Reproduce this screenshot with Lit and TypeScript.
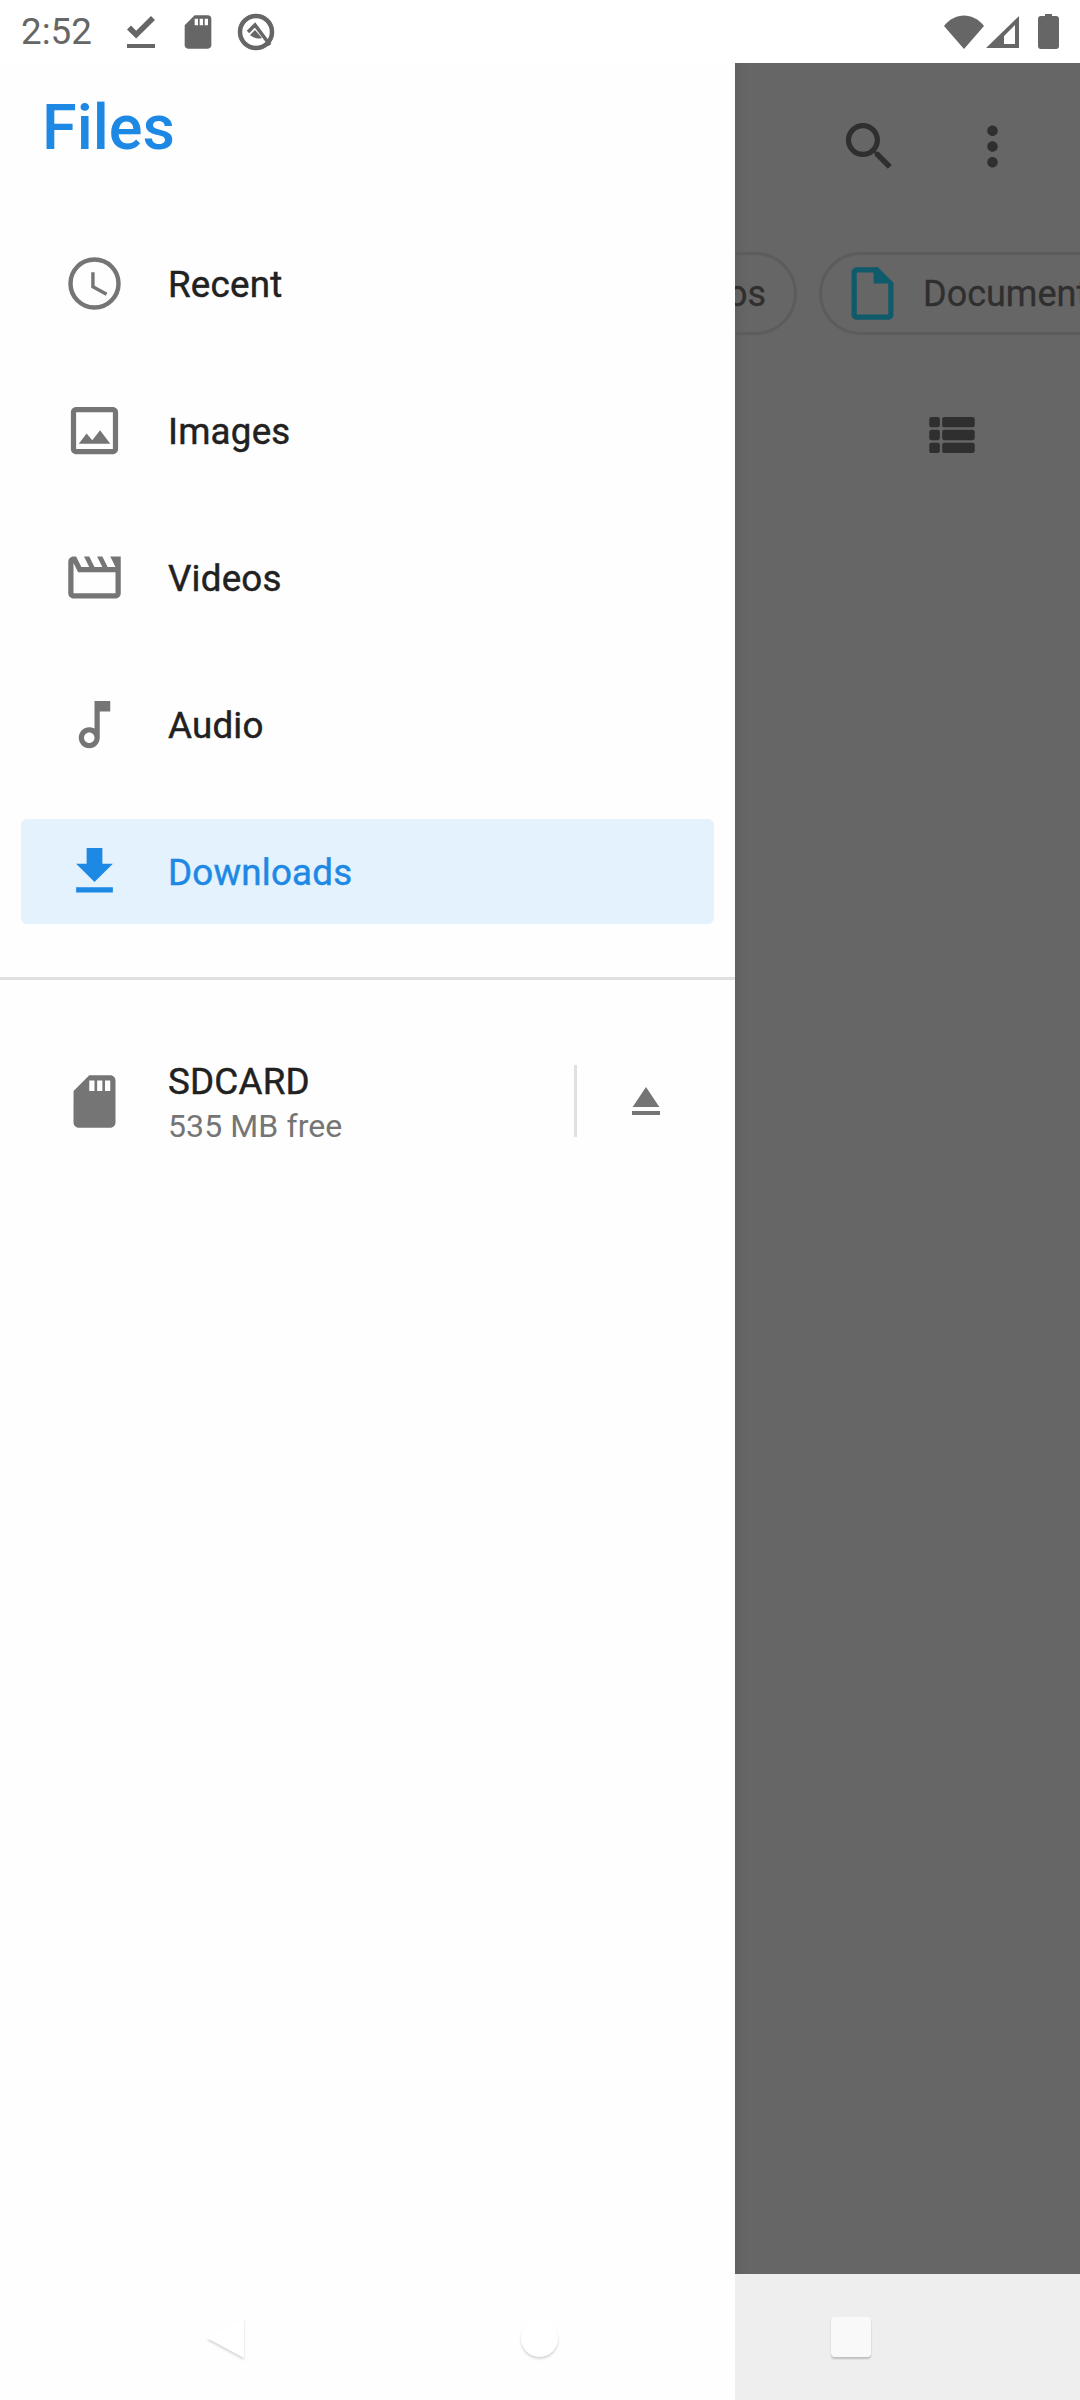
import { LitElement, html, css, svg } from 'lit';
import { customElement } from 'lit/decorators.js';

const ICONS = {
  recent: svg`<circle cx="12" cy="12" r="9.15" fill="none" stroke="currentColor" stroke-width="1.7"/><path d="M11.4 7.7v5.5l5.2 2.900" fill="none" stroke="currentColor" stroke-width="1.3"/>`,
  images: svg`<path d="M19 5v14H5V5h14m0-2H5c-1.1 0-2 .9-2 2v14c0 1.1.9 2 2 2h14c1.1 0 2-.9 2-2V5c0-1.1-.9-2-2-2z"/><path d="M14.14 11.86l-3 3.87L9 13.14 6 17h12l-3.86-5.14z"/>`,
  videos: svg`<path d="M4 6.47L5.76 10H20v8H4V6.47M22 4h-4l2 4h-3l-2-4h-2l2 4h-3l-2-4H8l2 4H7L5 4H4c-1.1 0-1.99.9-1.99 2L2 18c0 1.1.9 2 2 2h16c1.1 0 2-.9 2-2V4z"/>`,
  audio: svg`<path d="M12 3l.01 10.55c-.59-.34-1.27-.55-2-.55C7.79 13 6 14.79 6 17s1.79 4 4.01 4S14 19.21 14 17V7h4V3h-6zm-1.99 16c-1.1 0-2-.9-2-2s.9-2 2-2 2 .9 2 2-.9 2-2 2z"/>`,
  downloads: svg`<path d="M19 9h-4V3H9v6H5l7 7 7-7zM5 18v2h14v-2H5z"/>`,
  sd: svg`<path d="M18 2h-8L4.02 8 4 20c0 1.1.9 2 2 2h12c1.1 0 2-.9 2-2V4c0-1.1-.9-2-2-2zm-6 6h-2V4h2v4zm3 0h-2V4h2v4zm3 0h-2V4h2v4z"/>`,
  eject: svg`<path d="M5 17h14v2H5zm7-12L5.33 15h13.34z"/>`,
  done: svg`<path d="M5 18h14v2H5v-2zm4.6-2.7L5 10.7l2-1.9 2.6 2.6L17 4l2 2-9.4 9.3z"/>`,
  search: svg`<path d="M15.5 14h-.79l-.28-.27C15.41 12.59 16 11.11 16 9.5 16 5.91 13.09 3 9.5 3S3 5.91 3 9.5 5.91 16 9.5 16c1.61 0 3.09-.59 4.23-1.57l.27.28v.79l5 4.99L20.49 19l-4.99-5zm-6 0C7.01 14 5 11.99 5 9.5S7.01 5 9.5 5 14 7.01 14 9.5 11.99 14 9.5 14z"/>`,
  more: svg`<path d="M12 8c1.1 0 2-.9 2-2s-.9-2-2-2-2 .9-2 2 .9 2 2 2zm0 2c-1.1 0-2 .9-2 2s.9 2 2 2 2-.9 2-2-.9-2-2-2zm0 6c-1.1 0-2 .9-2 2s.9 2 2 2 2-.9 2-2-.9-2-2-2z"/>`,
  list: svg`<path d="M4 14h2.5a.8.8 0 0 0 .8-.8v-2.4a.8.8 0 0 0-.8-.8H4a.8.8 0 0 0-.8.8v2.4c0 .44.36.8.8.8zm0 5h2.5a.8.8 0 0 0 .8-.8v-2.4a.8.8 0 0 0-.8-.8H4a.8.8 0 0 0-.8.8v2.4c0 .44.36.8.8.8zm0-10h2.5a.8.8 0 0 0 .8-.8V5.800a.8.8 0 0 0-.8-.8H4a.8.8 0 0 0-.8.8v2.400c0 .44.36.8.8.8zm5 5h11a.8.8 0 0 0 .8-.8v-2.400a.8.8 0 0 0-.8-.8H9a.8.8 0 0 0-.8.8v2.400c0 .44.36.8.8.8zm0 5h11a.8.8 0 0 0 .8-.8v-2.400a.8.8 0 0 0-.8-.8H9a.8.8 0 0 0-.8.8v2.400c0 .44.36.8.8.8zM8.200 5.800v2.400c0 .44.36.8.8.8h11a.8.8 0 0 0 .8-.8V5.800a.8.8 0 0 0-.8-.8H9a.8.8 0 0 0-.8.8z"/>`,
  file: svg`<path d="M14 2H6c-1.100 0-1.990.9-1.990 2L4 20c0 1.100.89 2 1.990 2H18c1.100 0 2-.9 2-2V8l-6-6zm4 18H6V4h6.500v4H18v12z"/><path d="M12.500 2H14l6 6v.2h-7.500z"/>`,
};

type IconName = keyof typeof ICONS;

const icon = (name: IconName, cls = '') =>
  html`<svg class="icon ${cls}" viewBox="0 0 24 24" fill="currentColor">${ICONS[name]}</svg>`;

const ROOTS: { name: string; icon: IconName; active?: boolean }[] = [
  { name: 'Recent', icon: 'recent' },
  { name: 'Images', icon: 'images' },
  { name: 'Videos', icon: 'videos' },
  { name: 'Audio', icon: 'audio' },
  { name: 'Downloads', icon: 'downloads', active: true },
];

@customElement('app-root')
export class AppRoot extends LitElement {
  static styles = css`
    :host {
      display: block;
      width: 1080px;
      height: 2400px;
      overflow: hidden;
      background: #fefefe;
      font-family: Roboto, 'Noto Sans', sans-serif;
      color: #212121;
    }

    /* status bar */
    .status {
      height: 63px;
      display: flex;
      align-items: center;
      padding: 0 21px;
      color: #666;
      background: #fff;
    }
    .clock {
      font-size: 36.75px;
      width: 96px;
      margin-top: -1px;
    }
    .status .icon {
      width: 48px;
      height: 48px;
    }
    .status .sd {
      width: 40px;
      height: 40px;
      margin-left: 13px;
    }
    .qlogo {
      width: 38px;
      height: 38px;
      margin-left: 19px;
    }
    .status-right {
      margin-left: auto;
      display: flex;
      align-items: center;
    }
    .status-right svg {
      display: block;
    }

    .body {
      height: 2337px;
      display: flex;
    }

    /* drawer */
    .drawer {
      width: 735px;
      flex: none;
      display: flex;
      flex-direction: column;
      background: #fefefe;
    }
    .title {
      font-size: 63px;
      font-weight: 500;
      color: #1e88e5;
      line-height: 74px;
      padding: 28px 0 0 42px;
      height: 140px;
      box-sizing: border-box;
    }
    .roots {
      display: flex;
      flex-direction: column;
      gap: 42px;
      padding: 28px 21px 0;
    }
    /* the device's Roboto Medium is lighter than the installed one */
    .root,
    .sd-name {
      font-weight: 400;
      letter-spacing: 0.2px;
      -webkit-text-stroke: 0.45px currentColor;
    }
    .root {
      height: 105px;
      display: flex;
      align-items: center;
      padding-left: 42px;
      gap: 42px;
      border-radius: 6px;
      font-size: 36.75px;
      color: #212121;
    }
    .root span {
      padding-top: 2px;
    }
    .root .icon {
      width: 63px;
      height: 63px;
      color: #757575;
      flex: none;
    }
    .root.active {
      background: #e3f2fd;
      color: #1e88e5;
    }
    .root.active .icon {
      color: #1e88e5;
    }
    .divider {
      height: 3px;
      background: #e0e0e0;
      margin-top: 53px;
    }
    .sdcard {
      margin-top: 85px;
      height: 72px;
      display: flex;
      align-items: center;
      padding: 0 20px 0 63px;
    }
    .sdcard > .icon {
      width: 63px;
      height: 63px;
      color: #757575;
      flex: none;
      margin-right: 42px;
    }
    .sd-text {
      flex: 1;
      display: flex;
      flex-direction: column;
      font-size: 36.75px;
      line-height: 45px;
      padding-top: 6px;
    }
    .sd-name {
      color: #212121;
    }
    .sd-free {
      font-size: 32px;
      letter-spacing: 0.1px;
      color: #757575;
    }
    .sd-sep {
      width: 3px;
      height: 72px;
      background: #e0e0e0;
    }
    .eject {
      width: 138px;
      display: flex;
      justify-content: center;
      color: #757575;
    }
    .eject .icon {
      width: 48px;
      height: 48px;
    }

    /* nav buttons sit on the drawer and the grey bar */
    .nav {
      margin-top: auto;
      height: 126px;
      position: relative;
    }
    .nav-shape {
      position: absolute;
      top: 44px;
      filter: drop-shadow(0 2px 1px rgba(0, 0, 0, 0.16));
    }
    .back {
      left: 207px;
      width: 37px;
      height: 40px;
    }
    .home {
      left: 521px;
      top: 46px;
      width: 37px;
      height: 37px;
      border-radius: 50%;
      background: #fff;
    }

    /* dimmed page behind the drawer */
    .behind {
      flex: 1;
      display: flex;
      flex-direction: column;
      min-width: 0;
    }
    .scrim {
      flex: 1;
      background: #666;
      overflow: hidden;
      color: #2f2f2f;
      box-shadow: inset 14px 0 14px -14px rgba(0, 0, 0, 0.12);
    }
    .actions {
      display: flex;
      height: 115px;
      align-items: flex-end;
    }
    .actions .icon {
      width: 63px;
      height: 63px;
      flex: none;
    }
    .actions .search {
      margin-left: 103px;
    }
    .actions .more {
      margin-left: 59.5px;
    }
    .chips {
      display: flex;
      gap: 22px;
      margin: 74px 0 0 -178px;
    }
    .chip {
      flex: none;
      height: 83px;
      box-sizing: border-box;
      border: 3px solid #5c5c5c;
      border-radius: 42px;
      display: flex;
      align-items: center;
      font-size: 36px;
      color: #2f2f2f;
      -webkit-text-stroke: 0.3px currentColor;
    }
    .chip.videos {
      width: 240px;
      justify-content: flex-end;
      padding-right: 28px;
    }
    .chip.docs {
      width: 340px;
      padding-left: 18.5px;
      gap: 19.5px;
    }
    .chip .icon {
      width: 63px;
      height: 63px;
      color: #0f5a6b;
      flex: none;
    }
    .view {
      display: flex;
      margin: 69px 0 0 186px;
    }
    .view .icon {
      width: 62px;
      height: 62px;
    }
    .gesture-bar {
      height: 126px;
      flex: none;
      background: #eee;
      position: relative;
    }
    .recents {
      position: absolute;
      left: 96px;
      top: 43px;
      width: 40px;
      height: 40px;
      border-radius: 4px;
      background: #f9f9f9;
      box-shadow: 0 2px 2px rgba(0, 0, 0, 0.2);
    }
  `;

  private renderStatus() {
    return html`
      <div class="status">
        <span class="clock">2:52</span>
        ${icon('done')}
        ${icon('sd', 'sd')}
        <svg class="qlogo" viewBox="0 0 38 38" fill="none" stroke="currentColor">
          <circle cx="19" cy="19" r="16" stroke-width="4.500" />
          <path d="M11 19 L18 12 L33 32" stroke-width="3.500" />
          <path d="M13 22 L18 17 L25 25 Q19 27 13 22 Z" fill="currentColor" stroke="none" />
        </svg>
        <div class="status-right">
          <svg width="40" height="34" viewBox="0 0 40 34" fill="currentColor">
            <path d="M0 11 C11 -3 29 -3 40 11 L20 34 Z" />
          </svg>
          <svg style="margin-left:2px" width="34" height="34" viewBox="0 0 34 34" fill="currentColor">
            <path fill-rule="evenodd" d="M0 33 L33 1 V33 Z M18 29 H29 V10 L18 21 Z" />
          </svg>
          <svg style="margin-left:18px" width="21" height="35" viewBox="0 0 21 35" fill="currentColor">
            <path d="M7 0 H14 V2 H18 Q21 2 21 5 V32 Q21 35 18 35 H3 Q0 35 0 32 V5 Q0 2 3 2 H7 Z" />
          </svg>
        </div>
      </div>
    `;
  }

  private renderDrawer() {
    return html`
      <div class="drawer">
        <div class="title">Files</div>
        <div class="roots">
          ${ROOTS.map(
            (r) => html`
              <div class="root ${r.active ? 'active' : ''}">
                ${icon(r.icon)}
                <span>${r.name}</span>
              </div>
            `
          )}
        </div>
        <div class="divider"></div>
        <div class="sdcard">
          ${icon('sd')}
          <div class="sd-text">
            <span class="sd-name">SDCARD</span>
            <span class="sd-free">535 MB free</span>
          </div>
          <div class="sd-sep"></div>
          <div class="eject">${icon('eject')}</div>
        </div>
        <div class="nav">
          <svg class="nav-shape back" viewBox="0 0 37 40">
            <path d="M37 0 V40 L0 20 Z" fill="#fff" />
          </svg>
          <div class="nav-shape home"></div>
        </div>
      </div>
    `;
  }

  private renderBehind() {
    return html`
      <div class="behind">
        <div class="scrim">
          <div class="actions">
            ${icon('search', 'search')}
            ${icon('more', 'more')}
          </div>
          <div class="chips">
            <div class="chip videos">Videos</div>
            <div class="chip docs">${icon('file')}<span>Documents</span></div>
          </div>
          <div class="view">${icon('list')}</div>
        </div>
        <div class="gesture-bar"><div class="recents"></div></div>
      </div>
    `;
  }

  render() {
    return html`
      ${this.renderStatus()}
      <div class="body">${this.renderDrawer()} ${this.renderBehind()}</div>
    `;
  }
}
